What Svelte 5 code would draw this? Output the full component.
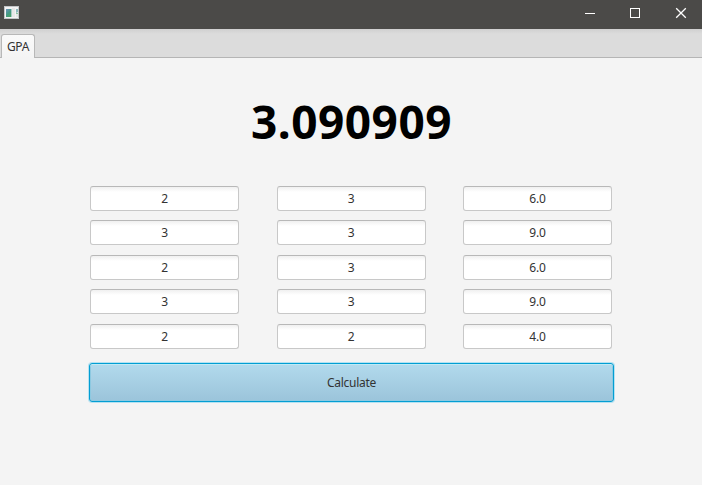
<script>
  let rows = $state([
    { grade: '2', credits: '3', points: '6.0' },
    { grade: '3', credits: '3', points: '9.0' },
    { grade: '2', credits: '3', points: '6.0' },
    { grade: '3', credits: '3', points: '9.0' },
    { grade: '2', credits: '2', points: '4.0' }
  ]);
  const keys = ['grade', 'credits', 'points'];
  const gpa = '3.090909';
</script>

<div class="window">
  <header class="titlebar">
    <svg class="app-icon" width="15" height="13" viewBox="0 0 15 13">
      <defs>
        <linearGradient id="pane" x1="0" y1="0" x2="0.6" y2="1">
          <stop offset="0" stop-color="#6f93bd" />
          <stop offset="0.6" stop-color="#459a86" />
          <stop offset="1" stop-color="#4aa36c" />
        </linearGradient>
      </defs>
      <rect width="15" height="13" fill="#c3c6c8" />
      <rect x="1" y="1" width="13" height="11" fill="#f4f4f4" />
      <rect x="2" y="3" width="5" height="8" fill="url(#pane)" />
      <rect x="7" y="3" width="1" height="8" fill="#a9cdc6" />
      <rect x="8" y="2" width="3" height="9" fill="#e8e8e8" />
      <path d="M12 3h2v3l-2 1z" fill="#8db9bd" />
      <rect x="12" y="7" width="2" height="1" fill="#8cc79f" />
      <rect x="12" y="8" width="2" height="3" fill="#e4e7e6" />
    </svg>
    <div class="controls">
      <svg width="46" height="28" viewBox="0 0 46 28"><path d="M19 13.5h10" stroke="#fff" /></svg>
      <svg width="46" height="28" viewBox="0 0 46 28"><rect x="18.5" y="8.5" width="9" height="9" fill="none" stroke="#fff" /></svg>
      <svg width="46" height="28" viewBox="0 0 46 28"><path d="M18.2 8.2l9.6 9.6M27.8 8.2l-9.6 9.6" stroke="#fff" stroke-width="1.3" /></svg>
    </div>
  </header>
  <nav class="tabs"><div class="tab">GPA</div></nav>
  <main>
    <h1>{gpa}</h1>
    <div class="grid">
      {#each rows as row}
        {#each keys as key}
          <input type="text" aria-label={key} bind:value={row[key]} />
        {/each}
      {/each}
    </div>
    <button type="button">Calculate</button>
  </main>
</div>

<style>
  :global(body) {
    margin: 0;
    background: #f4f4f4;
  }
  .window {
    height: 485px;
    display: flex;
    flex-direction: column;
    overflow: hidden;
    background: #f4f4f4;
    font-family: 'Noto Sans', 'Open Sans', sans-serif;
    font-size: 12px;
    color: #333;
  }
  .titlebar {
    height: 29px;
    flex: none;
    display: flex;
    justify-content: space-between;
    background: #4b4a48;
  }
  .app-icon {
    margin: 6px 0 0 4px;
  }
  .controls {
    display: flex;
    margin-right: -2px;
  }
  .tabs {
    height: 29px;
    flex: none;
    box-sizing: border-box;
    display: flex;
    padding: 5px 0 0 1px;
    background: linear-gradient(#d0d0d0, #dcdcdc 5px);
    border-bottom: 1px solid #b5b5b5;
  }
  .tab {
    box-sizing: border-box;
    width: 34px;
    height: 24px;
    border: 1px solid #b8b8b8;
    border-bottom: 0;
    border-radius: 3px 3px 0 0;
    background: linear-gradient(#fafafa, #f4f4f4);
    text-align: center;
    line-height: 23px;
    letter-spacing: -0.3px;
  }
  main {
    display: flex;
    flex-direction: column;
    padding: 34px 88px 0 89px;
  }
  h1 {
    margin: 0;
    height: 94px;
    font-size: 46px;
    line-height: 58px;
    font-weight: 700;
    letter-spacing: 0.5px;
    text-align: center;
    color: #000;
  }
  .grid {
    display: grid;
    grid-template-columns: repeat(3, 149px);
    column-gap: 37.5px;
    row-gap: 9.4px;
    padding-left: 1px;
    height: 163px;
  }
  input {
    box-sizing: border-box;
    width: 149px;
    height: 25px;
    margin: 0;
    padding: 0;
    border: 1px solid #c8c8c8;
    border-top-color: #b8b8b8;
    border-radius: 3px;
    background: linear-gradient(#f0f0f0, #fff 5px);
    font: inherit;
    color: #333;
    text-align: center;
    letter-spacing: -0.2px;
    outline: none;
  }
  button {
    box-sizing: border-box;
    height: 39px;
    margin: 14px 0 0;
    padding: 0 0 1px;
    border: 1px solid #039ed3;
    border-radius: 3px;
    background: linear-gradient(#b2daed, #9bc4da);
    box-shadow: 0 0 0 1px #b5e2f1, inset 0 1px #c0eaf5, inset 0 0 0 1px #8dc9e1;
    font: inherit;
    letter-spacing: -0.3px;
    color: #333;
  }
</style>
